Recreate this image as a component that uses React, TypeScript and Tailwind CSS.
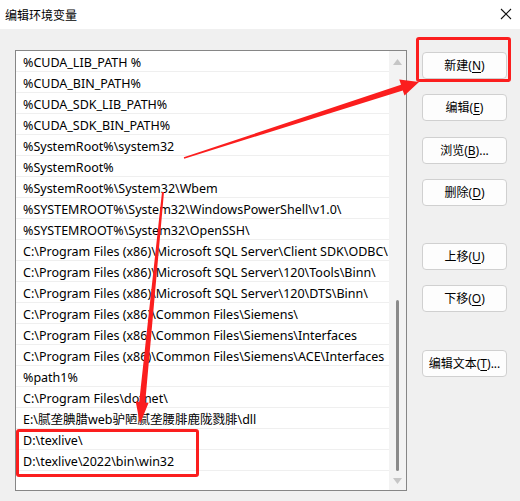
import React from "react";

const rows = [
  "%CUDA_LIB_PATH %",
  "%CUDA_BIN_PATH%",
  "%CUDA_SDK_LIB_PATH%",
  "%CUDA_SDK_BIN_PATH%",
  "%SystemRoot%\\system32",
  "%SystemRoot%",
  "%SystemRoot%\\System32\\Wbem",
  "%SYSTEMROOT%\\System32\\WindowsPowerShell\\v1.0\\",
  "%SYSTEMROOT%\\System32\\OpenSSH\\",
  "C:\\Program Files (x86)\\Microsoft SQL Server\\Client SDK\\ODBC\\110\\Tools\\Binn\\",
  "C:\\Program Files (x86)\\Microsoft SQL Server\\120\\Tools\\Binn\\",
  "C:\\Program Files (x86)\\Microsoft SQL Server\\120\\DTS\\Binn\\",
  "C:\\Program Files (x86)\\Common Files\\Siemens\\",
  "C:\\Program Files (x86)\\Common Files\\Siemens\\Interfaces",
  "C:\\Program Files (x86)\\Common Files\\Siemens\\ACE\\Interfaces",
  "%path1%",
  "C:\\Program Files\\dotnet\\",
  "E:\\腻垄腆腊web驴陋腻垄腰腓鹿陇戮腓\\dll",
  "D:\\texlive\\",
  "D:\\texlive\\2022\\bin\\win32",
  "",
];

function arrowPoints(
  x1: number,
  y1: number,
  x2: number,
  y2: number,
  w1: number,
  w2: number,
  hl: number,
  hw: number
) {
  const L = Math.hypot(x2 - x1, y2 - y1);
  const ux = (x2 - x1) / L;
  const uy = (y2 - y1) / L;
  const nx = -uy;
  const ny = ux;
  const bx = x2 - ux * hl;
  const by = y2 - uy * hl;
  const p = (x: number, y: number) => `${x.toFixed(1)},${y.toFixed(1)}`;
  return [
    p(x1 + (nx * w1) / 2, y1 + (ny * w1) / 2),
    p(bx + (nx * w2) / 2, by + (ny * w2) / 2),
    p(bx + (nx * hw) / 2, by + (ny * hw) / 2),
    p(x2, y2),
    p(bx - (nx * hw) / 2, by - (ny * hw) / 2),
    p(bx - (nx * w2) / 2, by - (ny * w2) / 2),
    p(x1 - (nx * w1) / 2, y1 - (ny * w1) / 2),
  ].join(" ");
}

function Btn({
  label,
  mn,
  tail = "",
  className = "",
}: {
  label: string;
  mn: string;
  tail?: string;
  className?: string;
}) {
  return (
    <div
      className={`h-[27px] w-[85px] rounded-[4px] border border-[#d0d0d0] bg-[#fdfdfd] flex items-center justify-center text-[12px] text-black ${className}`}
    >
      <span>
        {label}(<span className="underline underline-offset-2">{mn}</span>){tail}
      </span>
    </div>
  );
}

export default function App() {
  return (
    <div
      className="relative w-[520px] h-[501px] bg-[#f0f0f0] overflow-hidden"
      style={{ fontFamily: '"Noto Sans", "Noto Sans CJK SC", sans-serif' }}
    >
      {/* title bar */}
      <div className="h-[29px] bg-white flex items-center justify-between pl-[5px] pr-[8px]">
        <span
          className="text-[12px] text-black"
          style={{ fontFamily: '"Noto Sans CJK SC", sans-serif' }}
        >
          编辑环境变量
        </span>
        <svg width="12" height="12" viewBox="0 0 12 12" className="mt-[-1px]">
          <path d="M1 1 L11 11 M11 1 L1 11" stroke="#111" strokeWidth="1.1" />
        </svg>
      </div>

      <div className="flex pl-[15px] pt-[21px] gap-[15px]">
        {/* list box */}
        <div className="w-[392px] h-[441px] border border-[#868686] bg-white flex">
          <div className="flex-1 overflow-hidden">
            {rows.map((r, i) => (
              <div
                key={i}
                className="h-[21px] border-b border-[#efefef] pl-[7px] text-[12.5px] leading-[23px] text-black whitespace-nowrap overflow-hidden"
              >
                {r}
              </div>
            ))}
          </div>
          <div className="w-[17px] bg-[#f3f3f3] relative flex flex-col items-center">
            <svg width="9" height="6" viewBox="0 0 9 6" className="mt-[8px]">
              <path d="M0 6 L4.5 0 L9 6 Z" fill="#c6c6c6" />
            </svg>
            <div className="mt-[235px] w-[3px] h-[171px] rounded-full bg-[#8a8a8a]" />
            <svg width="9" height="6" viewBox="0 0 9 6" className="mt-[7px]">
              <path d="M0 0 L9 0 L4.5 6 Z" fill="#c6c6c6" />
            </svg>
          </div>
        </div>

        {/* buttons */}
        <div className="flex flex-col pt-[2px]">
          <Btn label="新建" mn="N" />
          <Btn label="编辑" mn="E" className="mt-[15px]" />
          <Btn label="浏览" mn="B" tail="..." className="mt-[16px]" />
          <Btn label="删除" mn="D" className="mt-[15px]" />
          <Btn label="上移" mn="U" className="mt-[37px]" />
          <Btn label="下移" mn="O" className="mt-[15px]" />
          <Btn label="编辑文本" mn="T" tail="..." className="mt-[38px]" />
        </div>
      </div>

      {/* annotations */}
      <div className="absolute left-[416px] top-[37px] w-[95px] h-[45px] border-[3px] border-[#fb1e1e] rounded-[3px] pointer-events-none" />
      <div className="absolute left-[16px] top-[429px] w-[183px] h-[48px] border-[3px] border-[#fb1e1e] rounded-[3px] pointer-events-none" />
      <svg
        className="absolute left-0 top-0 pointer-events-none"
        width="520"
        height="501"
        viewBox="0 0 520 501"
      >
        <polygon points={arrowPoints(184, 158, 419, 82, 1.5, 6, 18, 17)} fill="#fb1e1e" />
        <polygon points={arrowPoints(163, 192, 140, 424, 2, 6, 22, 13)} fill="#fb1e1e" />
      </svg>
    </div>
  );
}
